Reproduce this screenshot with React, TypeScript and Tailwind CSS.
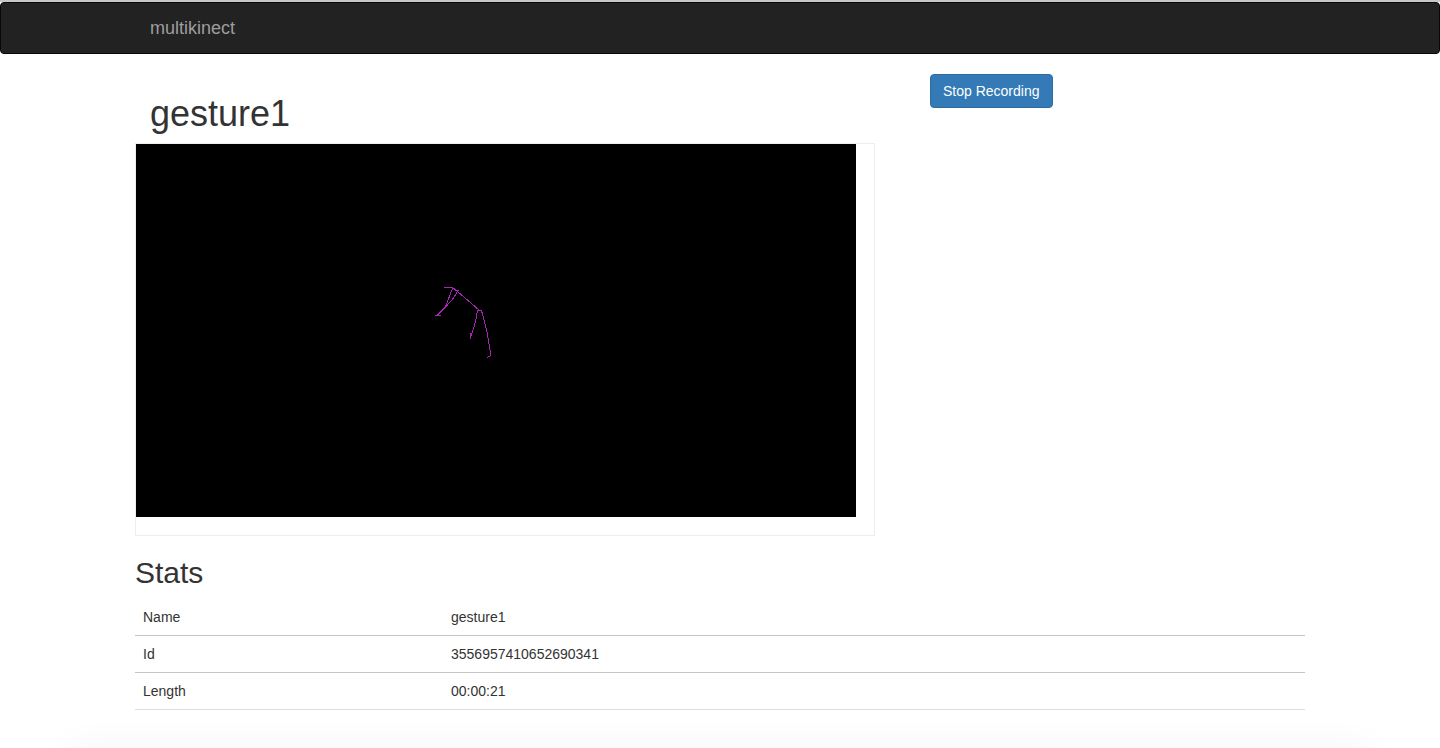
const stats = [
  { label: "Name", value: "gesture1" },
  { label: "Id", value: "3556957410652690341" },
  { label: "Length", value: "00:00:21" },
];

// Bones of the tracked skeleton, in viewer coordinates.
const bones = [
  "308,143.5 316.5,143.5 317.5,144.5 319.5,145.5 321.5,147.5 343,166",
  "316.5,144.5 314.5,149.5 310.5,160.5 308.5,164.5 301,171.5",
  "318.5,146.5 323,146.5",
  "321.5,147.5 318.5,152.5 315.5,156.5 309.5,163 301,171.5",
  "299,171.5 305,171.5",
  "341,166.5 345.5,166.5",
  "341.5,166.5 340.5,172.5 338.5,181.5 334.5,193.5",
  "334.5,189 334.5,195",
  "345.5,166.5 350.5,185.5 354.5,208.5 354.5,211.5 351.5,213.5",
];

function Navbar() {
  return (
    <nav className="mb-5 rounded border border-[#080808] bg-[#222222]">
      <div className="mx-auto max-w-[1170px] px-[15px] py-[15px]">
        <a href="#" className="block w-fit text-[18px] leading-5 text-[#9d9d9d]">
          multikinect
        </a>
      </div>
    </nav>
  );
}

function SkeletonViewer() {
  return (
    <div className="mr-10 border border-[#eeeeee] pr-[18px] pb-[18px]">
      <svg
        viewBox="0 0 720 373"
        className="block w-full bg-black"
        role="img"
        aria-label="Skeleton viewer"
        fill="none"
        stroke="#a626b3"
        strokeWidth="1"
        shapeRendering="crispEdges"
      >
        {bones.map((points) => (
          <polyline key={points} points={points} />
        ))}
      </svg>
    </div>
  );
}

function StatsTable() {
  return (
    <table className="w-full table-fixed border-collapse text-left text-sm leading-5">
      <tbody>
        {stats.map((row) => (
          <tr key={row.label} className="border-b border-[#c4c6c6] last:border-[#dddddd]">
            <th scope="row" className="w-[308px] p-2 font-normal">
              {row.label}
            </th>
            <td className="p-2">{row.value}</td>
          </tr>
        ))}
      </tbody>
    </table>
  );
}

export default function App() {
  return (
    <div className="flex min-h-screen flex-col border-t-2 border-[#c4c8c8] bg-white font-['Liberation_Sans',Arial,sans-serif] text-[#333333]">
      <Navbar />
      <main className="mx-auto w-full max-w-[1170px]">
        <div className="grid grid-cols-3">
          <section className="col-span-2">
            <h1 className="mt-5 mb-2.5 px-[15px] text-[36px] leading-[39px] font-medium">gesture1</h1>
            <SkeletonViewer />
          </section>
          <div className="px-[15px]">
            <button
              type="button"
              className="rounded border border-[#2e6da4] bg-[#337ab7] px-3 py-1.5 text-sm leading-5 text-white"
            >
              Stop Recording
            </button>
          </div>
        </div>
        <section>
          <h2 className="mt-5 mb-2.5 text-[30px] leading-[33px] font-medium">Stats</h2>
          <StatsTable />
        </section>
      </main>
      <footer className="mt-auto flex h-9 items-end overflow-hidden">
        <div className="mx-20 h-px flex-1 translate-y-full shadow-[0_16px_40px_12px_rgba(0,0,0,0.06)]" />
      </footer>
    </div>
  );
}
